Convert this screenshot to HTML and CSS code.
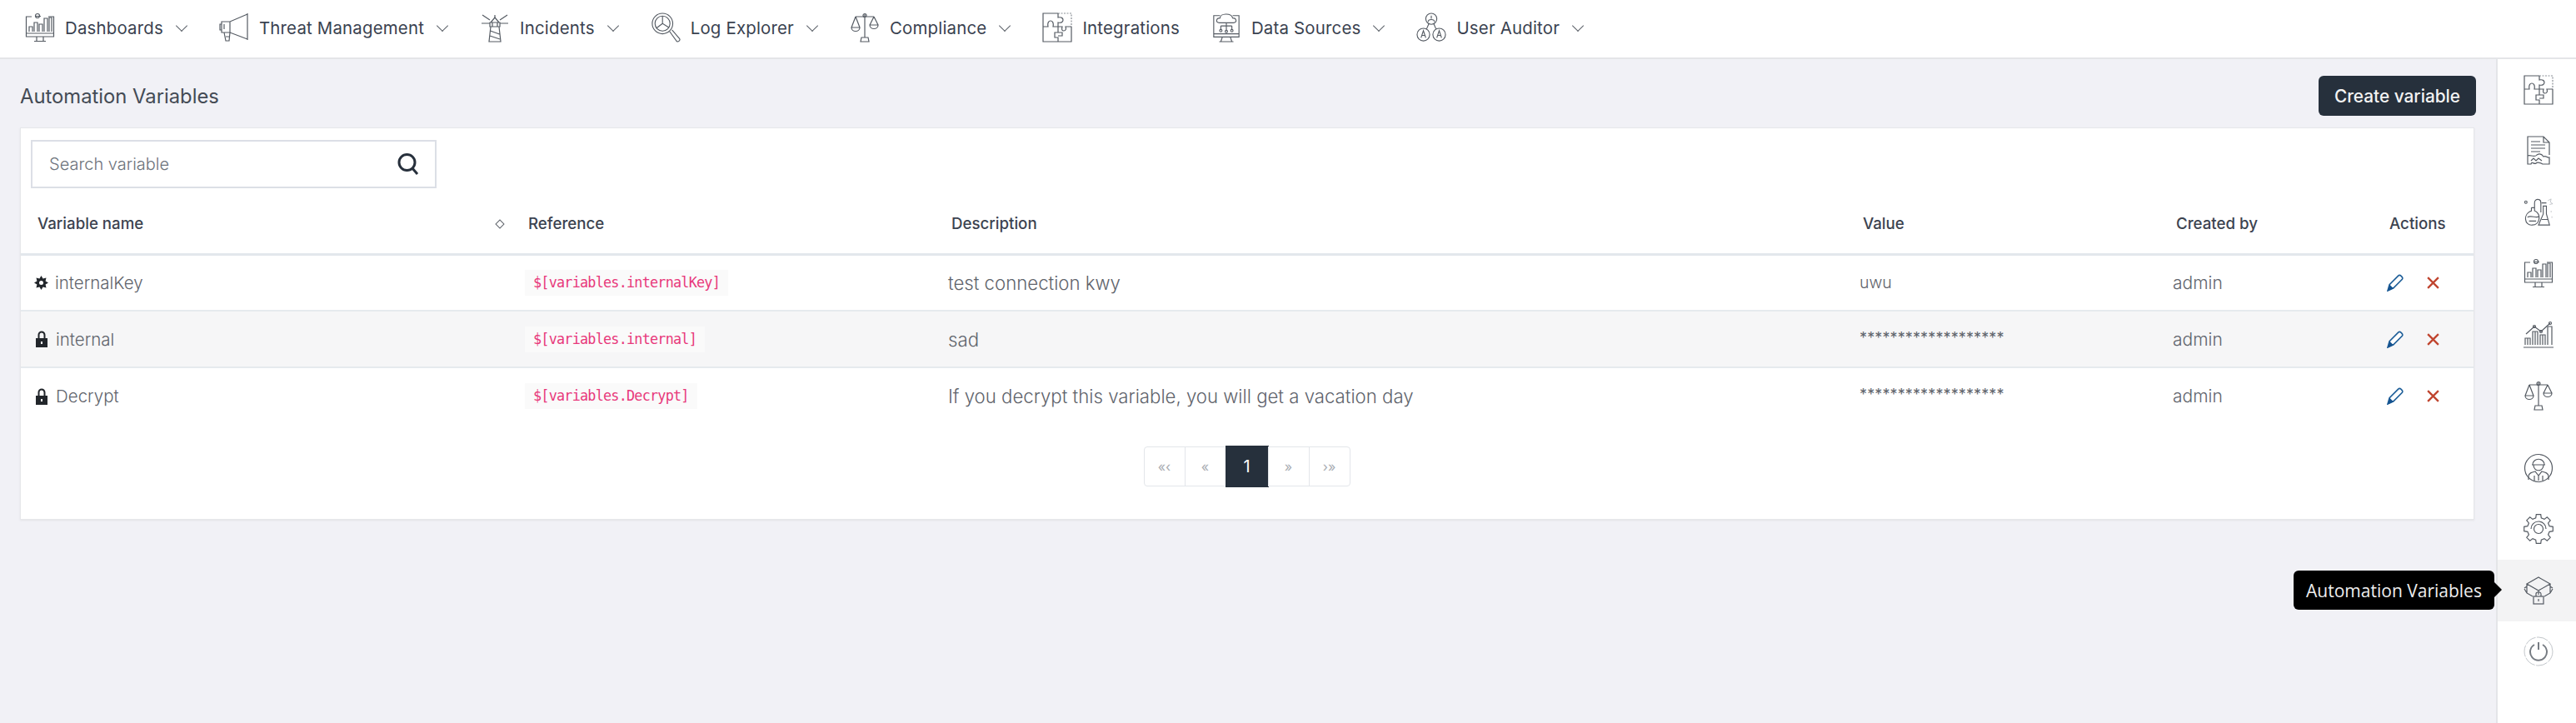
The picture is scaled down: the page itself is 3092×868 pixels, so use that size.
FILE: index.html
```html
<!DOCTYPE html>
<html lang="en">
<head>
<meta charset="utf-8">
<title>Automation Variables</title>
<link rel="stylesheet" href="styles.css">
</head>
<body>
<svg class="defs" width="0" height="0" aria-hidden="true">
  <symbol id="i-monitor" viewBox="0 0 36 36"><path d="M8 5H1.500V29H34.500V5H28M1.500 25H34.500M14 29V34M22 29V34M11 34.500H25"/><path d="M5 23V17H9V23M11 23V12H15V23M17 23V14H21V23M23 23V7H27V23M29 23V6H32V23M12 4.500H19"/><circle cx="15" cy="4" r="2.500"/></symbol>
  <symbol id="i-megaphone" viewBox="0 0 36 36"><path d="M34 1V33M34 2 13 11H3V24H13L34 32M13 11V24M3 14H1V21H3M6 24 8 34H12L13 24M8 29H12"/><path d="M6 14V20"/></symbol>
  <symbol id="i-lighthouse" viewBox="0 0 36 36"><path d="M13 12 18 6 23 12M12 12H24V17H12ZM13 17 11 35H25L23 17M12.500 22 23.500 26M12 28 24 32M15 12V17M21 12V17"/><path d="M12 9 3 3M24 9 33 3M12 13H2M24 13H34M18 6V3"/></symbol>
  <symbol id="i-logsearch" viewBox="0 0 38 38"><circle cx="15" cy="14" r="13"/><circle cx="15" cy="14" r="9.500"/><path d="M15 4.500V14L23 19M15 14 7 20M24 24 33 36.500C35 38 38 35 36.500 33L27 22"/></symbol>
  <symbol id="i-scale" viewBox="0 0 36 36"><path d="M18 2V30M7 5H29M7 5 2 18M7 5 12 18M29 5 24 15M29 5 34 15M2 18H12C12 24 2 24 2 18ZM24 15H34C34 21 24 21 24 15ZM14 30H22L23 35H13Z"/><circle cx="18" cy="3.500" r="2"/></symbol>
  <symbol id="i-puzzle" viewBox="0 0 36 36"><path d="M19 1H1V35H35V17"/><path class="dash" d="M19 1H35V17"/><path d="M1 17H7C6 12 8 10 10 10 12 10 14 12 13 17H19M19 1V6C23 5 25 7 25 9 25 11 23 13 19 12V17M19 17H24C23 21 24 22 26 22 28 22 29 20 28 17H35M19 17V24H15V30H19V35M19 24H24V28H19"/></symbol>
  <symbol id="i-datasrc" viewBox="0 0 36 38"><path d="M10 4H2V31H34V4H26M2 27H34M13 31 11 37M23 31 25 37M9 37H27"/><path d="M11 13H9C4 13 5 7 10 7 10 1 24 0 26 7 31 7 32 13 27 13H11ZM18 13V23M11 17H25M11 17V22M25 17V22"/><circle cx="11" cy="23" r="1.500"/><circle cx="18" cy="24" r="1.500"/><circle cx="25" cy="23" r="1.500"/></symbol>
  <symbol id="i-users" viewBox="0 0 38 38"><circle cx="19" cy="8" r="7"/><circle cx="9" cy="28" r="8"/><circle cx="29" cy="28" r="8"/><path d="M16 14 13 21M22 14 25 21M15 12C15 8 23 8 23 12M19 4V8M6 32 9 23 12 32M7 29H11M26 32 29 23 32 32M27 29H31"/></symbol>
  <symbol id="i-doc" viewBox="0 0 30 36"><path d="M2 24V1H21L28 8V23M21 1V8H28M6 7H17M6 11H23M6 15H23M6 19H17M2 24V34H6C7 30 10 35 12 33 14 31 18 33 20 34H28V26C25 27 24 23 21 25 19 22 16 21 13 23 10 27 5 22 2 24Z"/><path d="M6 30 9 27 12 30 15 27 19 30"/></symbol>
  <symbol id="i-flask" viewBox="0 0 38 36"><circle cx="3" cy="5" r="1.500"/><path d="M10 12V16C-1 20 1 35 11 34 21 34 23 20 14 16V12M10 12H14M5 24C10 21 16 26 20 23M7 29H16M14 12V6C14 0 22 0 22 6V18M23 6H29M25 10V20L19 34H33L29 20V10ZM23 27H31"/><path class="thin" d="M31 3 35 1 34 5 37 7 33 8M35 16V18M36 23V25"/></symbol>
  <symbol id="i-trend" viewBox="0 0 36 32"><path d="M0 31H36M2 28V20H8V28M11 28V12H17V28M20 28V16H26V28M29 28V6H34V28M5 20V28M14 12V28M23 16V28"/><path d="M3 15 13 6 21 12 32 2"/><circle cx="13" cy="6" r="1.500"/><circle cx="21" cy="12" r="1.500"/><circle cx="32" cy="2" r="1.500"/></symbol>
  <symbol id="i-person" viewBox="0 0 36 36"><circle cx="18" cy="18" r="16.500"/><path d="M11 14C11 5 25 5 25 14M10 14H26M12 14C12 23 24 23 24 14M6 32V28C6 24 10 23 14 22L18 27 22 22C26 23 30 24 30 28V32M18 27V33M13 27V33M23 27V33"/></symbol>
  <symbol id="i-gear" viewBox="0 0 36 36"><path d="M14.700 4.900 15.300 .7H20.700L21.300 4.900 25 6.400 28.300 3.800 32.200 7.700 29.600 11 31.100 14.700 35.300 15.300V20.700L31.100 21.300 29.600 25 32.200 28.300 28.300 32.200 25 29.600 21.300 31.100 20.700 35.300H15.300L14.700 31.100 11 29.600 7.700 32.200 3.800 28.300 6.400 25 4.900 21.300 .7 20.700V15.300L4.900 14.700 6.400 11 3.800 7.700 7.700 3.800 11 6.400Z"/><circle cx="18" cy="18" r="5.500"/><path d="M9 18A9 9 0 0 1 27 18"/></symbol>
  <symbol id="i-cube" viewBox="0 0 36 34"><path d="M18 1 32 9 18 17 4 9ZM4 9V20L11 24M32 9V20L25 24M18 17V22M1 14 4 12M35 14 32 12M4 20 1 15M32 20 35 15"/><rect x="12" y="24" width="12" height="9"/><path d="M15 24V21C15 18 21 18 21 21V24M18 27V30"/></symbol>
  <symbol id="i-power" viewBox="0 0 36 36"><circle class="thin" cx="18" cy="18" r="17" stroke-dasharray="14 1.500"/><path class="thick" d="M13 10A10 10 0 1 0 23 10M18 7V16"/></symbol>
  <symbol id="i-gearfill" viewBox="0 0 17 17"><path class="solid" fill-rule="evenodd" d="M8.500 0 10.600 3.400 14.500 2.500 13.600 6.400 17 8.500 13.600 10.600 14.500 14.500 10.600 13.600 8.500 17 6.400 13.600 2.500 14.500 3.400 10.600 0 8.500 3.400 6.400 2.500 2.500 6.400 3.400ZM8.500 6A2.500 2.500 0 1 0 8.500 11 2.500 2.500 0 1 0 8.500 6Z"/></symbol>
  <symbol id="i-lock" viewBox="0 0 14 20"><path class="solid" fill-rule="evenodd" d="M2.500 9V5A4.500 4.500 0 0 1 11.500 5V9H14V20H0V9ZM4.500 9H9.500V5A2.500 2.500 0 0 0 4.500 5ZM6 13V16H8V13Z"/></symbol>
  <symbol id="i-pencil" viewBox="0 0 20 20"><path class="pen" d="M1 19 3 12 13 2C15 0 19 4 17.500 6L7.500 16Z"/><path class="pentip" d="M1 19.500 3 12 7.500 16.500Z"/></symbol>
</svg>

<header class="topbar">
  <nav class="nav">
    <a class="nav-item"><svg class="nav-icon"><use href="#i-monitor"/></svg><span>Dashboards</span><i class="chev"></i></a>
    <a class="nav-item"><svg class="nav-icon"><use href="#i-megaphone"/></svg><span>Threat Management</span><i class="chev"></i></a>
    <a class="nav-item"><svg class="nav-icon"><use href="#i-lighthouse"/></svg><span>Incidents</span><i class="chev"></i></a>
    <a class="nav-item"><svg class="nav-icon"><use href="#i-logsearch"/></svg><span>Log Explorer</span><i class="chev"></i></a>
    <a class="nav-item"><svg class="nav-icon"><use href="#i-scale"/></svg><span>Compliance</span><i class="chev"></i></a>
    <a class="nav-item"><svg class="nav-icon"><use href="#i-puzzle"/></svg><span>Integrations</span></a>
    <a class="nav-item"><svg class="nav-icon nav-icon-dark"><use href="#i-datasrc"/></svg><span>Data Sources</span><i class="chev"></i></a>
    <a class="nav-item"><svg class="nav-icon"><use href="#i-users"/></svg><span>User Auditor</span><i class="chev"></i></a>
  </nav>
</header>

<div class="shell">
  <main class="content">
    <div class="page-head">
      <h1 class="page-title">Automation Variables</h1>
      <button class="btn-create">Create variable</button>
    </div>
    <section class="card">
      <div class="search">
        <span class="search-text">Search variable</span>
        <svg class="search-icon" viewBox="0 0 28 28"><circle cx="12.500" cy="12" r="9.500"/><path d="M19 19 25 26"/></svg>
      </div>
      <table class="grid">
        <colgroup>
          <col class="c1"><col class="c2"><col class="c3"><col class="c4"><col class="c5"><col class="c6">
        </colgroup>
        <thead>
          <tr>
            <th><div class="th-sort"><span>Variable name</span><i class="diamond"></i></div></th>
            <th>Reference</th>
            <th>Description</th>
            <th>Value</th>
            <th>Created by</th>
            <th>Actions</th>
          </tr>
        </thead>
        <tbody>
          <tr>
            <td><div class="name"><svg class="key-icon"><use href="#i-gearfill"/></svg>internalKey</div></td>
            <td><code class="chip">$[variables.internalKey]</code></td>
            <td class="desc">test connection kwy</td>
            <td>uwu</td>
            <td class="by">admin</td>
            <td><div class="acts"><svg class="pencil"><use href="#i-pencil"/></svg><svg class="del" viewBox="0 0 16 16"><path d="M2 2 14 14M14 2 2 14"/></svg></div></td>
          </tr>
          <tr class="alt">
            <td><div class="name"><svg class="lock-icon"><use href="#i-lock"/></svg>internal</div></td>
            <td><code class="chip">$[variables.internal]</code></td>
            <td class="desc">sad</td>
            <td class="mask">*******************</td>
            <td class="by">admin</td>
            <td><div class="acts"><svg class="pencil"><use href="#i-pencil"/></svg><svg class="del" viewBox="0 0 16 16"><path d="M2 2 14 14M14 2 2 14"/></svg></div></td>
          </tr>
          <tr>
            <td><div class="name"><svg class="lock-icon"><use href="#i-lock"/></svg>Decrypt</div></td>
            <td><code class="chip">$[variables.Decrypt]</code></td>
            <td class="desc">If you decrypt this variable, you will get a vacation day</td>
            <td class="mask">*******************</td>
            <td class="by">admin</td>
            <td><div class="acts"><svg class="pencil"><use href="#i-pencil"/></svg><svg class="del" viewBox="0 0 16 16"><path d="M2 2 14 14M14 2 2 14"/></svg></div></td>
          </tr>
        </tbody>
      </table>
      <div class="pager">
        <span class="pg">«‹</span><span class="pg">«</span><span class="pg pg-on">1</span><span class="pg">»</span><span class="pg">›»</span>
      </div>
    </section>
  </main>

  <aside class="rail">
    <div class="rail-group">
      <a class="rail-item"><svg class="rail-icon"><use href="#i-puzzle"/></svg></a>
      <a class="rail-item"><svg class="rail-icon"><use href="#i-doc"/></svg></a>
      <a class="rail-item"><svg class="rail-icon"><use href="#i-flask"/></svg></a>
      <a class="rail-item"><svg class="rail-icon"><use href="#i-monitor"/></svg></a>
      <a class="rail-item"><svg class="rail-icon"><use href="#i-trend"/></svg></a>
      <a class="rail-item"><svg class="rail-icon"><use href="#i-scale"/></svg></a>
    </div>
    <div class="rail-group rail-lower">
      <a class="rail-item"><svg class="rail-icon"><use href="#i-person"/></svg></a>
      <a class="rail-item"><svg class="rail-icon"><use href="#i-gear"/></svg></a>
      <a class="rail-item rail-on"><svg class="rail-icon"><use href="#i-cube"/></svg><span class="tooltip">Automation Variables</span></a>
      <a class="rail-item"><svg class="rail-icon"><use href="#i-power"/></svg></a>
    </div>
  </aside>
</div>
</body>
</html>
```
FILE: styles.css
```css
* { box-sizing: border-box; }
html, body { margin: 0; height: 100%; }
body {
  font-family: Inter, "Open Sans", "Liberation Sans", sans-serif;
  color: #3f4650;
  background: #f1f1f6;
  overflow: hidden;
  display: flex;
  flex-direction: column;
}
.defs { position: absolute; }
symbol path, symbol circle, symbol rect { fill: none; stroke: #555b63; stroke-width: 1.200; }
symbol .thin { stroke-width: .7; stroke: #a8adb3; }
symbol .thick { stroke-width: 2; stroke: #777c83; }
symbol .dash { stroke-dasharray: 2 1.500; stroke: #8a8f96; }
symbol path.solid { fill: #22262b; stroke: none; }
symbol path.pen { stroke: #1f5f99; stroke-width: 1.600; fill: #fff; }
symbol path.pentip { fill: #14528f; stroke: none; }

.topbar {
  height: 71px;
  flex: none;
  background: #fff;
  border-bottom: 2px solid #e4e5e8;
  display: flex;
  align-items: center;
}
.nav { display: flex; padding-left: 30px; gap: 38px; margin-top: -3px; }
.nav-item { display: flex; align-items: center; font-size: 20.400px; color: #3a4250; letter-spacing: .2px; }
.nav-icon { width: 36px; height: 36px; margin-right: 12px; flex: none; }
.chev {
  width: 10px; height: 10px; margin: -4px 2px 0 17px;
  border-right: 1.200px solid #5b6068; border-bottom: 1.200px solid #5b6068;
  transform: rotate(45deg);
}

.shell { flex: 1; display: flex; min-height: 0; }
.content { flex: 1; padding: 20px 24px 0; min-width: 0; }
.page-head { display: flex; justify-content: space-between; align-items: center; height: 48px; margin-bottom: 14px; }
.page-title { margin: 0; font-size: 23.800px; font-weight: 400; color: #444b55; }
.btn-create {
  width: 189px; height: 48px; border: 0; border-radius: 6px;
  background: #26303c; color: #f3f3f3; font: 500 20.800px Inter, sans-serif;
}

.card {
  background: #fff;
  border: 1px solid #e6e7ea;
  box-shadow: 0 1px 2px #e3e3e6;
  height: 471px;
  margin-right: 2px;
  padding-top: 14px;
}
.search {
  margin-left: 12px; width: 487px; height: 58px;
  border: 2px solid #dcdfe6; background: #fff;
  display: flex; align-items: center; justify-content: space-between;
  padding: 0 18px 0 20px;
}
.search-text { font-size: 20px; font-weight: 300; color: #6d737c; }
.search-icon { width: 28px; height: 28px; }
.search-icon circle, .search-icon path { fill: none; stroke: #27303c; stroke-width: 3; }

.grid { width: 100%; table-layout: fixed; border-collapse: collapse; margin-top: 8px; }
.c1 { width: 597px; } .c2 { width: 508px; } .c3 { width: 1094px; }
.c4 { width: 376px; } .c5 { width: 256px; }
th {
  height: 71px; padding: 0 0 0 12px; text-align: left;
  font-size: 18.700px; font-weight: 500; color: #3c4350;
  border-bottom: 3px solid #e3e7ec;
}
th:first-child { padding-left: 20px; }
.th-sort { display: flex; justify-content: space-between; align-items: center; padding-right: 18px; }
.diamond { width: 8px; height: 8px; border: 1px solid #5f646b; transform: rotate(45deg); }
td {
  height: 68px; padding: 0 0 0 8px;
  font-size: 19.500px; font-weight: 300; color: #5f646c;
  border-bottom: 2px solid #e6eaee;
}
tbody tr:last-child td { border-bottom: 0; }
td:first-child { padding-left: 16px; }
.alt td { background: #f6f6f7; }
.desc { font-size: 22.200px; }
.by { font-size: 21px; }
.mask { font-size: 18px; font-weight: 400; letter-spacing: .12px; padding-bottom: 4px; }
.name { display: flex; align-items: center; gap: 9px; font-size: 20.500px; }
.key-icon { width: 17px; height: 17px; margin-right: -1px; }
.lock-icon { width: 14px; height: 20px; margin-left: 2px; margin-right: 1px; }
.chip {
  display: inline-block; padding: 6px 10px; background: #fafafa;
  font: 400 16.800px/19px "DejaVu Sans Mono", "Liberation Mono", monospace;
  letter-spacing: -.77px; color: #e8397a;
}
.acts { display: flex; align-items: center; gap: 26px; padding-left: 1px; }
.pencil { width: 21px; height: 21px; }
.del { width: 17px; height: 17px; }
.del path { fill: none; stroke: #c0452f; stroke-width: 2.200; }

.pager { display: flex; justify-content: center; margin-top: 27px; }
.pg {
  width: 50px; height: 48px; display: flex; align-items: center; justify-content: center;
  background: #fff; border: 1px solid #e3e6ea; margin-left: -1px;
  font-size: 16px; color: #a8acb2;
}
.pg:first-child { border-radius: 4px 0 0 4px; }
.pg:last-child { border-radius: 0 4px 4px 0; }
.pg-on { background: #26303c; border-color: #26303c; color: #fff; font-size: 20px; height: 50px; margin-top: -1px; width: 52px; }

.rail {
  width: 96px; flex: none; background: #fff;
  border-left: 2px solid #e4e5e8;
}
.rail-group { display: flex; flex-direction: column; }
.rail-lower { margin-top: 13px; }
.rail-item { position: relative; height: 73.500px; display: flex; align-items: center; justify-content: center; }
.rail-icon { width: 36px; height: 36px; margin-left: 4px; }
.rail-on { background: #f3f3f4; }
.tooltip {
  position: absolute; right: 98px; top: 13px;
  width: 241px; height: 47px; border-radius: 6px;
  background: #000; color: #eee;
  display: flex; align-items: center; justify-content: center;
  font: 400 21px "Open Sans", Lato, sans-serif;
}
.tooltip::after {
  content: ""; position: absolute; left: 100%; top: 14px;
  border-left: 9px solid #000;
  border-top: 9px solid transparent; border-bottom: 9px solid transparent;
}
```
